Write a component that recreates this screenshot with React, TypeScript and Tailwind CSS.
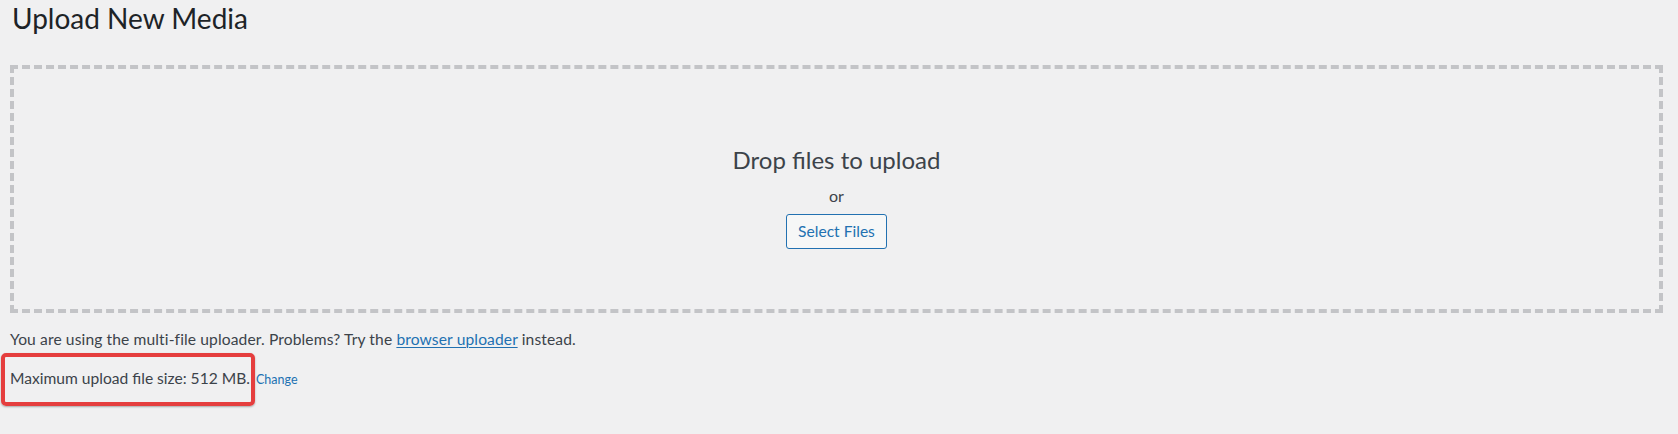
import React from "react";

export default function App() {
  return (
    <div
      className="w-[1678px] h-[434px] bg-[#f0f0f1] text-[#3c434a] overflow-hidden"
      style={{ fontFamily: "Lato, 'Noto Sans', sans-serif" }}
    >
      <h1 className="pl-[12px] text-[28px] leading-[36px] font-normal text-[#1d2327]">
        Upload New Media
      </h1>
      <div className="mt-[29px] ml-[10px] mr-[15px] h-[248px] border-4 border-dashed border-[#c3c4c7] flex flex-col items-center pt-[75px]">
        <p className="text-[24px] leading-[32px] text-[#3c434a]">Drop files to upload</p>
        <p className="mt-[8px] text-[16px] leading-[24px]">or</p>
        <button className="mt-[6px] w-[101px] h-[35px] rounded-[3px] border border-[#2271b1] bg-[#f6f7f7] text-[#2271b1] text-[15.6px] leading-none">
          Select Files
        </button>
      </div>
      <p className="mt-[14px] pl-[10px] text-[15.6px] leading-[24px] tracking-[0.12px]">
        You are using the multi-file uploader. Problems? Try the{" "}
        <span className="text-[#2271b1] underline decoration-1 underline-offset-2">browser uploader</span> instead.
      </p>
      <div className="relative mt-[15px] pl-[10px] flex items-baseline gap-[6px]">
        <span className="text-[15.6px] leading-[24px]">Maximum upload file size: 512 MB.</span>
        <span className="text-[12.5px] leading-[24px] text-[#2271b1]">Change</span>
        <div className="absolute left-[1px] top-[-13px] w-[254px] h-[53px] border-4 border-[#e53e3e] rounded-[5px] shadow-[0_1px_2px_rgba(0,0,0,0.3)]" />
      </div>
    </div>
  );
}
